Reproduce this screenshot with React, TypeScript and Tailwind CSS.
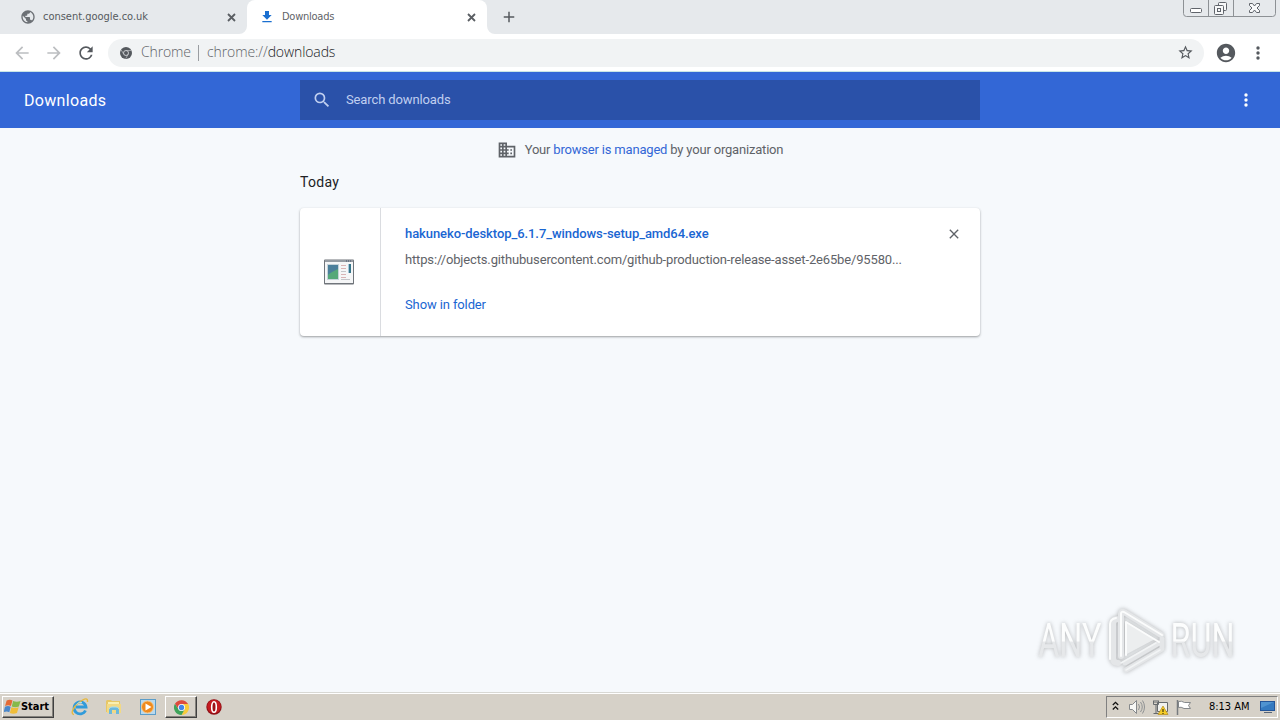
import type { ReactNode } from "react";
import {
  MdAccountCircle,
  MdAdd,
  MdArrowBack,
  MdArrowForward,
  MdClose,
  MdDomain,
  MdFileDownload,
  MdPublic,
  MdRefresh,
  MdSearch,
  MdStarBorder,
} from "react-icons/md";

function ChromeMono() {
  return (
    <svg width="12" height="12" viewBox="0 0 24 24" className="shrink-0">
      <circle cx="12" cy="12" r="12" fill="#55595e" />
      <circle cx="12" cy="12" r="5" fill="none" stroke="#e3e5e7" strokeWidth="1.6" />
      <path d="M12 7h10.5M7.6 14.5L2.4 6M16.3 14.5L11.5 23" stroke="#c9cccf" strokeWidth="1.300" />
    </svg>
  );
}

function ChromeColor() {
  return (
    <svg width="15" height="15" viewBox="0 0 24 24">
      <path d="M12 12V0L22.4 6A12 12 0 0 1 12 24L17 14.5z" fill="#f7cb3b" />
      <path d="M12 12L7 14.5 1.6 6A12 12 0 0 0 12 24l5-9z" fill="#3fa35a" />
      <path d="M1.6 6A12 12 0 0 1 22.4 6.5H12L7 14z" fill="#dd4b3e" />
      <circle cx="12" cy="12" r="5.6" fill="#fff" />
      <circle cx="12" cy="12" r="4.3" fill="#4385e8" />
    </svg>
  );
}

function TabClose() {
  return (
    <svg width="9" height="9" viewBox="0 0 9 9" className="mr-[2px]">
      <path d="M1 1l7 7M8 1L1 8" stroke="#5a5e63" strokeWidth="1.800" />
    </svg>
  );
}

function Kebab({ className }: { className: string }) {
  return (
    <svg width="6" height="14" viewBox="0 0 6 14" fill="currentColor" className={className}>
      <circle cx="3" cy="2" r="1.700" />
      <circle cx="3" cy="7" r="1.700" />
      <circle cx="3" cy="12" r="1.700" />
    </svg>
  );
}

function WindowControls() {
  return (
    <svg width="94" height="17" viewBox="0 0 94 17" fill="none" className="mr-[3px]">
      <path d="M.5 0v13.5q0 3 3 3h86q3 0 3-3V0M25.5 0v16M50.5 0v16" stroke="#8d9195" />
      <rect x="7.5" y="8.500" width="11" height="4" rx="1" fill="#fff" stroke="#60646b" />
      <g stroke="#60646b" fill="#f7f8f9">
        <rect x="35.500" y="2.500" width="8" height="8" rx="1" />
        <rect x="31.500" y="5.500" width="9" height="9" rx="1" />
        <rect x="34.500" y="8.500" width="3" height="3" />
      </g>
      <path d="M66.500 3.500h3l2 2.500 2-2.500h3v2l-2.500 2.500 2.500 2.500v2h-3l-2-2.500-2 2.500h-3v-2l2.500-2.500-2.500-2.500z" fill="#f8f9fa" stroke="#60646b" />
    </svg>
  );
}

function TabStrip() {
  return (
    <div className="flex h-[34px] bg-[#e6e9ec]">
      <div className="flex h-[34px] w-[247px] items-center pr-[9px] pl-[20px]">
        <MdPublic className="size-[16px] shrink-0 text-[#6c7075]" />
        <span className="ml-[7px] flex-1 pt-px font-['DejaVu_Sans_Condensed','DejaVu_Sans',sans-serif] text-[11px] tracking-[-0.02px] text-[#55595e]">
          consent.google.co.uk
        </span>
        <TabClose />
      </div>
      <div className="relative flex h-[34px] w-[240px] items-center rounded-t-[8px] bg-white pr-[9px] pl-[12px]">
        <svg width="8" height="8" viewBox="0 0 8 8" className="absolute bottom-0 -left-[8px]">
          <path d="M8 0a8 8 0 0 1-8 8h8z" fill="#fff" />
        </svg>
        <svg width="8" height="8" viewBox="0 0 8 8" className="absolute -right-[8px] bottom-0">
          <path d="M0 0a8 8 0 0 0 8 8H0z" fill="#fff" />
        </svg>
        <MdFileDownload className="size-[16px] shrink-0 text-[#1a6fd0]" />
        <span className="ml-[7px] flex-1 pt-px font-['DejaVu_Sans_Condensed','DejaVu_Sans',sans-serif] text-[11px] tracking-[-0.25px] text-[#5f6368]">
          Downloads
        </span>
        <TabClose />
      </div>
      <div className="ml-[13px] flex h-[34px] flex-1 items-center">
        <MdAdd className="size-[18px] text-[#55595e]" />
      </div>
      <WindowControls />
    </div>
  );
}

function Toolbar() {
  return (
    <div className="flex h-[38px] items-center border-b border-[#c9e6e6] bg-white pl-[12px]">
      <MdArrowBack className="size-[20px] text-[#bcbec1]" />
      <MdArrowForward className="ml-[12px] size-[20px] text-[#bcbec1]" />
      <MdRefresh className="ml-[12px] size-[20px] text-[#55595e]" />
      <div className="ml-[12px] flex h-[28px] w-[1096px] items-center rounded-full bg-[#f1f3f4] pr-[10px] pl-[12px] font-['Open_Sans',sans-serif] text-[14px] font-light whitespace-nowrap text-[#5f6368]">
        <ChromeMono />
        <span className="ml-[9px] w-[49px] pb-[2px] tracking-[-0.15px]">Chrome</span>
        <span className="ml-[8px] h-[16px] w-px bg-[#9a9da1]" />
        <span className="ml-[8px] flex-1 pb-[2px] tracking-[-0.1px]">
          chrome://<span className="text-[#202124]">downloads</span>
        </span>
        <MdStarBorder className="size-[17px] text-[#55595e]" />
      </div>
      <MdAccountCircle className="ml-[11px] size-[22px] text-[#55595e]" />
      <Kebab className="ml-[18px] text-[#55595e]" />
    </div>
  );
}

function DownloadsHeader() {
  return (
    <header className="flex h-[56px] items-center bg-[#3367d6]">
      <h1 className="w-[300px] pt-[2px] pl-[24px] text-[16px] tracking-[0.32px] text-white">Downloads</h1>
      <div className="flex h-[40px] w-[680px] items-center bg-[#2a51a9] pl-[12px] text-[#c0cff0]">
        <MdSearch className="size-[20px]" />
        <span className="ml-[14px] text-[13px] tracking-[-0.12px]">Search downloads</span>
      </div>
      <Kebab className="mr-[31px] ml-auto text-white" />
    </header>
  );
}

function InstallerIcon() {
  return (
    <svg width="32" height="28" viewBox="0 0 32 28">
      <rect x="1" y="1.500" width="30" height="25" rx="1" fill="#70757b" />
      <rect x="2" y="4" width="28" height="21" fill="#f5f6f7" />
      <path d="M2 2.500h28v1H2z" fill="#bcc4cc" />
      <path d="M23 3h1m1 0h1m1 0h1" stroke="#45536a" />
      <path d="M4 6h12v16H4z" fill="#c5d3da" />
      <path d="M5 7h10v14H5z" fill="#4c8a9a" />
      <path d="M5 17l10-8v12H5z" fill="#55a879" />
      <path d="M5 7h10v4L5 16z" fill="#4b7f9b" />
      <path d="M18 7.500h5M18 10.500h5M18 16.500h5M18 19.500h5" stroke="#d9b4b5" />
      <path d="M18 13.500h5M18 21.500h9" stroke="#c4c6ca" />
      <path d="M26 6h2v9h-2z" fill="#36758a" />
      <path d="M25 6h1v9h-1z" fill="#a9c9dc" />
    </svg>
  );
}

function DownloadCard() {
  return (
    <article className="mx-auto flex h-[128px] w-[680px] rounded-[4px] bg-white shadow-[0_1px_2px_rgba(60,64,67,0.35),0_1px_3px_rgba(60,64,67,0.18)]">
      <div className="flex w-[81px] items-center justify-center border-r border-[#dadce0] pr-[2px]">
        <InstallerIcon />
      </div>
      <div className="flex flex-1 flex-col pt-[16px] pl-[24px] text-[13px] leading-[20px]">
        <div className="flex justify-between pr-[18px]">
          <span className="font-medium tracking-[-0.075px] text-[#1a66d2]">
            hakuneko-desktop_6.1.7_windows-setup_amd64.exe
          </span>
          <MdClose className="mt-[2px] size-[16px] text-[#5f6368]" />
        </div>
        <span className="mt-[6px] tracking-[-0.15px] text-[#5f6368]">
          https://objects.githubusercontent.com/github-production-release-asset-2e65be/95580...
        </span>
        <span className="mt-[25px] tracking-[-0.12px] text-[#1a66d2]">Show in folder</span>
      </div>
    </article>
  );
}

function Watermark() {
  return (
    <div className="absolute top-[607px] left-[1038px] flex h-[68px] w-[196px] items-center justify-between drop-shadow-[0_0_2px_rgba(80,80,80,0.4)]">
      <span className="flex w-[64px] justify-center">
        <span className="scale-x-[0.66] bg-linear-to-b from-[#fcfdfd] from-50% to-[#e6e8ea] to-52% bg-clip-text text-[49px] leading-[54px] text-transparent">
          ANY
        </span>
      </span>
      <svg width="60" height="66" viewBox="0 0 60 66" fill="none" strokeLinejoin="round" strokeLinecap="round">
        <path d="M21 14l28 17-28 15z" fill="#eceeef" />
        <path d="M12 11q-5 0-5 5v34q0 5 5 5M15 48V6q0-3 3-2l37 23" stroke="#e4e6e8" strokeWidth="6" />
        <path d="M19 55l34-20M20 62l36-21V31" stroke="#e4e6e8" strokeWidth="5" />
        <path d="M10 10q-6 1-6 6v35M15 48V6q0-3 3-2l38 23M20 47V14l33 20" stroke="#fbfcfc" strokeWidth="2" />
        <path d="M15 55l35-20M20 62l34-20" stroke="#f2f4f5" strokeWidth="1.500" />
      </svg>
      <span className="flex w-[64px] justify-center">
        <span className="scale-x-[0.66] bg-linear-to-b from-[#fcfdfd] from-50% to-[#e6e8ea] to-52% bg-clip-text text-[49px] leading-[54px] text-transparent">
          RUN
        </span>
      </span>
    </div>
  );
}

function IeIcon() {
  return (
    <svg width="18" height="18" viewBox="0 0 18 18" fill="none">
      <path d="M14.500 12.500A6 6 0 1 1 15 9H5" stroke="#319bda" strokeWidth="2.800" />
      <path d="M3 16.500C-1 16 2 9 8 4.500S17-.5 16.500 4" stroke="#e6b93f" strokeWidth="1.400" />
      <path d="M5.500 6.500Q8 3.500 11 4.500" stroke="#a4dcf6" />
    </svg>
  );
}

function FolderIcon() {
  return (
    <svg width="18" height="18" viewBox="0 0 18 18">
      <path d="M1 3l1-1h4l1 1h8v11H1z" fill="#e7c766" />
      <path d="M3 4h11v8H3z" fill="#f9efb2" />
      <path d="M2 6h14v9H2z" fill="#f2d985" />
      <path d="M4 16v-4q0-3 3-3h4q3 0 3 3v4h-3v-4H7v4z" fill="#6cb8dc" />
      <path d="M4 11q1-2 3-2h4q2 0 3 2" fill="none" stroke="#a9dff2" />
    </svg>
  );
}

function MediaIcon() {
  return (
    <svg width="18" height="18" viewBox="0 0 18 18">
      <rect x="1.500" y="1.500" width="15" height="15" fill="#b9d9ed" stroke="#5b9dc9" />
      <circle cx="8.500" cy="9" r="6" fill="#ef8a1d" stroke="#f7c583" />
      <path d="M6.500 5.500l6 3.500-6 3.500z" fill="#fff" />
    </svg>
  );
}

function OperaIcon() {
  return (
    <svg width="16" height="16" viewBox="0 0 16 16">
      <circle cx="8" cy="8" r="7.700" fill="#8e1016" />
      <circle cx="8" cy="7.500" r="6.800" fill="#c51b20" />
      <ellipse cx="8" cy="8" rx="2.300" ry="5.300" fill="#9c1116" stroke="#fff" strokeWidth="1.600" />
    </svg>
  );
}

function StartFlag() {
  return (
    <svg width="17" height="16" viewBox="0 0 16 16" preserveAspectRatio="none" className="shrink-0">
      <path d="M2.500 1.500q3-1.500 5.500 0L6.500 7Q4 5.500 1 7z" fill="#e46a35" />
      <path d="M8.600 2q3.400 1.500 7 0L14 7.600q-3.500 1.500-6.700 0z" fill="#86b94a" />
      <path d="M.9 7.700q3-1.500 5.400 0L5 13.200q-2.500-1.500-5.300 0z" fill="#4a87ca" />
      <path d="M7 8.300q3.500 1.500 6.800 0L12.200 14q-3.500 1.500-6.700 0z" fill="#f0bd38" />
    </svg>
  );
}

function QuickSlot({ children }: { children: ReactNode }) {
  return <div className="flex h-[22px] w-[34px] items-center justify-center">{children}</div>;
}

function Tray() {
  return (
    <div className="ml-auto flex h-[22px] w-[172px] items-center border border-[#808080] border-r-white border-b-white pl-[5px]">
      <svg width="7" height="10" viewBox="0 0 7 10" fill="none" stroke="#111" strokeWidth="1.300" className="mb-[2px]">
        <path d="M.8 4l2.700-2.700L6.200 4M.8 8.500l2.700-2.700 2.700 2.700" />
      </svg>
      <svg width="18" height="16" viewBox="0 0 18 16" fill="none" className="ml-[9px]">
        <path d="M1.500 5.500h3l4-4v13l-4-4h-3z" fill="#f7f7f5" stroke="#85888b" />
        <path d="M10.500 5q2 3 0 6M12.500 3q3.500 5 0 10M14.500 1.500q4 6.500 0 13" stroke="#8e9193" />
      </svg>
      <svg width="17" height="17" viewBox="0 0 17 17" className="ml-[6px]">
        <path d="M5.500 3.500h10v9h-10z" fill="#f1f1ee" stroke="#65696c" />
        <path d="M1.500 1.500v4h5v-4M4 6v8.500M1.500 14.500h5M3 1v3M5 1v3" fill="none" stroke="#65696c" />
        <path d="M11 7l5 8.500H6z" fill="#f5cd27" stroke="#b58a18" strokeWidth=".7" />
        <path d="M11 10v3m0 1v1" stroke="#42370b" strokeWidth="1.200" />
      </svg>
      <svg width="18" height="17" viewBox="0 0 18 17" className="ml-[6px]">
        <path d="M3.500 2.500q3-1 6 1h6l-2 3 2 3H9q-3-2-5.500-1z" fill="#fff" stroke="#85888b" />
        <path d="M2.500 1v15" stroke="#777b7f" strokeWidth="1.500" />
      </svg>
      <span className="ml-[16px] w-[45px] pt-px font-['DejaVu_Sans_Condensed','DejaVu_Sans',sans-serif] text-[11px] tracking-[-0.03px] whitespace-nowrap text-black">
        8:13 AM
      </span>
      <svg width="15" height="14" viewBox="0 0 15 14" className="ml-[6px]">
        <path d="M0 1h15v10H0z" fill="#245598" />
        <path d="M1 2h13v8H1z" fill="#347ac0" />
        <path d="M1 2h13L1 8z" fill="#4f93d0" />
        <path d="M4 12h8v1H4z" fill="#586577" />
      </svg>
    </div>
  );
}

function Taskbar() {
  return (
    <footer className="h-[28px] bg-[#d6d1c8]">
      <div className="h-px bg-[#d8d8d4]" />
      <div className="h-px bg-white" />
      <div className="flex h-[26px] items-center pr-[2px] pl-[2px]">
        <button className="flex h-[22px] w-[52px] items-center border border-white border-r-[#404040] border-b-[#404040] pl-px font-['DejaVu_Sans_Condensed','DejaVu_Sans',sans-serif] text-[11px] font-bold tracking-[-0.05px] text-black shadow-[inset_-1px_-1px_#85827c]">
          <StartFlag />
          <span className="pt-px">Start</span>
        </button>
        <div className="ml-[9px] flex items-center">
          <QuickSlot><IeIcon /></QuickSlot>
          <QuickSlot><FolderIcon /></QuickSlot>
          <QuickSlot><MediaIcon /></QuickSlot>
          <div className="flex h-[22px] w-[32px] items-center justify-center border border-white border-r-[#404040] border-b-[#404040] shadow-[inset_-1px_-1px_#85827c]">
            <ChromeColor />
          </div>
          <QuickSlot><OperaIcon /></QuickSlot>
        </div>
        <Tray />
      </div>
    </footer>
  );
}

export default function App() {
  return (
    <div className="relative flex h-[720px] w-[1280px] flex-col overflow-hidden bg-[#f6f9fc] font-[Roboto,sans-serif]">
      <TabStrip />
      <Toolbar />
      <DownloadsHeader />
      <main className="flex-1">
        <div className="flex h-[44px] items-center justify-center text-[13px] tracking-[-0.19px] text-[#5f6368]">
          <MdDomain className="mr-[8px] size-[20px]" />
          <span>
            Your <a className="text-[#3367d6]">browser is managed</a> by your organization
          </span>
        </div>
        <h2 className="mx-auto h-[36px] w-[680px] text-[14px] leading-[21px] tracking-[0.3px] text-[#202124]">Today</h2>
        <DownloadCard />
      </main>
      <Watermark />
      <Taskbar />
    </div>
  );
}
